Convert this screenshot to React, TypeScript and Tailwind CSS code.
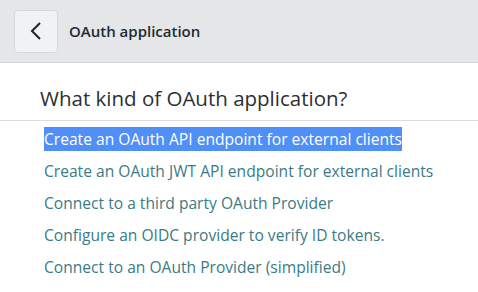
import React from "react";

const links = [
  "Create an OAuth API endpoint for external clients",
  "Create an OAuth JWT API endpoint for external clients",
  "Connect to a third party OAuth Provider",
  "Configure an OIDC provider to verify ID tokens.",
  "Connect to an OAuth Provider (simplified)",
];

export default function App() {
  return (
    <div className="w-[478px] h-[292px] bg-white font-['Open_Sans',sans-serif] overflow-hidden">
      {/* HEADER */}
      <div className="h-[63px] bg-[#e4e6e7] border-b border-[#d3d6d8] flex items-center px-[14px] gap-[11px]">
        <button className="w-[44px] h-[43px] rounded-[4px] bg-[#f1f2f3] border border-[#d5d8da] flex items-center justify-center">
          <svg width="12" height="18" viewBox="0 0 12 18" fill="none">
            <polyline points="10,1 2,9 10,17" stroke="#1f2327" strokeWidth="2" strokeLinejoin="miter" />
          </svg>
        </button>
        <span className="text-[15px] font-semibold text-[#1f2a33]">OAuth application</span>
      </div>

      {/* HEADING */}
      <div className="h-[58px] border-b border-[#dadcde] pl-[40px] pt-[21px]">
        <h1 className="text-[20.5px] leading-[28px] text-[#2a2f33]">What kind of OAuth application?</h1>
      </div>

      {/* LINKS */}
      <div className="pl-[44px] pt-[6px] flex flex-col gap-[8px]">
        {links.map((l, i) => (
          <div key={l} className="h-[24px] leading-[24px] text-[15.6px]">
            {i === 0 ? (
              <span className="bg-[#4f8ff7] text-white inline-block">{l}</span>
            ) : (
              <span className="text-[#3a7b84]">{l}</span>
            )}
          </div>
        ))}
      </div>
    </div>
  );
}
